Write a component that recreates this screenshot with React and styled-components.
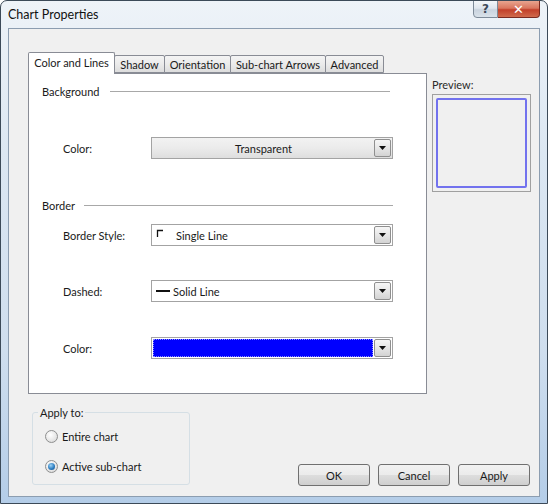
import styled, { createGlobalStyle } from "styled-components";

const GlobalStyle = createGlobalStyle`
  html, body {
    margin: 0;
    padding: 0;
    background: #ffffff;
  }
  * {
    box-sizing: border-box;
  }
`;

const Window = styled.div`
  width: 548px;
  height: 504px;
  display: flex;
  flex-direction: column;
  border: 1px solid #3c4a58;
  border-radius: 7px 7px 0 0;
  background: linear-gradient(180deg, #eef3f8 0%, #dce7f2 30%, #cfdeee 70%, #b4cde8 100%);
  font-family: Lato, "Noto Sans", sans-serif;
  font-size: 11px;
  color: #1a1a1a;
  overflow: hidden;
`;

const TitleBar = styled.div`
  height: 27px;
  display: flex;
  align-items: flex-start;
  padding-left: 7px;
`;

const Title = styled.div`
  margin-top: 6px;
  font-size: 12.5px;
  color: #111;
`;

const CaptionButtons = styled.div`
  margin-left: auto;
  margin-right: 7px;
  display: flex;
  margin-top: -1px;
`;

const CaptionButton = styled.div`
  width: ${(p) => p.$w}px;
  height: 18px;
  display: flex;
  align-items: center;
  justify-content: center;
  border: 1px solid ${(p) => (p.$close ? "#7a2a20" : "#7d8a98")};
  border-radius: ${(p) => (p.$close ? "0 0 4px 0" : "0 0 0 4px")};
  border-left-width: ${(p) => (p.$close ? 0 : 1)}px;
  background: ${(p) =>
    p.$close
      ? "linear-gradient(180deg, #e8a48f 0%, #d9765e 45%, #c2402a 55%, #d06a4c 100%)"
      : "linear-gradient(180deg, #f3f6f9 0%, #dfe6ee 45%, #c9d3de 55%, #d9e2ea 100%)"};
  color: ${(p) => (p.$close ? "#fff" : "#3d4a58")};
  font-weight: bold;
  font-size: ${(p) => (p.$close ? 13 : 12)}px;
  font-family: "DejaVu Sans", sans-serif;
`;

const Client = styled.div`
  flex: 1;
  margin: 0 7px 6px 7px;
  border: 1px solid #8c9db0;
  background: #f0f0f0;
  display: flex;
  flex-direction: column;
  padding: 23px 0 0 19px;
`;

const TopRow = styled.div`
  display: flex;
  gap: 5px;
`;

const TabsArea = styled.div`
  width: 399px;
  display: flex;
  flex-direction: column;
`;

const TabStrip = styled.div`
  display: flex;
  align-items: flex-end;
  height: 21px;
  position: relative;
  z-index: 1;
`;

const Tab = styled.div`
  width: ${(p) => p.$w}px;
  height: ${(p) => (p.$active ? 22 : 18)}px;
  margin-left: -1px;
  margin-bottom: ${(p) => (p.$active ? -1 : 0)}px;
  border: 1px solid #898c95;
  border-bottom: ${(p) => (p.$active ? "none" : "1px solid #898c95")};
  border-radius: 2px 2px 0 0;
  background: ${(p) =>
    p.$active ? "#ffffff" : "linear-gradient(180deg, #f4f4f4 0%, #ebebeb 50%, #dddddd 100%)"};
  display: flex;
  align-items: center;
  justify-content: center;
  padding-bottom: ${(p) => (p.$active ? 3 : 0)}px;
  white-space: nowrap;
  &:first-child {
    margin-left: 0;
  }
`;

const Panel = styled.div`
  height: 321px;
  background: #ffffff;
  border: 1px solid #898c95;
  padding: 10px 33px 0 13px;
  display: flex;
  flex-direction: column;
`;

const SectionHeader = styled.div`
  display: flex;
  align-items: center;
  height: 14px;
  margin-top: ${(p) => p.$mt}px;
  margin-right: ${(p) => p.$mr}px;
  &::after {
    content: "";
    flex: 1;
    height: 1px;
    background: #a8a8a8;
    margin-left: ${(p) => p.$gap}px;
  }
`;

const FormRow = styled.div`
  display: flex;
  align-items: center;
  margin-top: ${(p) => p.$mt}px;
`;

const FieldLabel = styled.div`
  width: 109px;
  padding-left: 21px;
`;

const Combo = styled.div`
  width: 242px;
  height: 22px;
  display: flex;
  align-items: stretch;
  border: 1px solid #a3a3a3;
  background: ${(p) =>
    p.$button ? "linear-gradient(180deg, #f2f2f2 0%, #ebebeb 50%, #dedede 100%)" : "#ffffff"};
  padding: 1px;
`;

const ComboValue = styled.div`
  flex: 1;
  display: flex;
  align-items: center;
  justify-content: ${(p) => (p.$center ? "center" : "flex-start")};
  padding-left: ${(p) => (p.$center ? 0 : 3)}px;
  gap: 3px;
`;

const ColorFill = styled.div`
  flex: 1;
  background: ${(p) => p.$color};
  outline: 1px dotted #8a8aff;
  outline-offset: -1px;
  margin-right: 1px;
`;

const DropButton = styled.div`
  width: 17px;
  display: flex;
  align-items: center;
  justify-content: center;
  border: 1px solid #8f8f8f;
  border-radius: 2px;
  background: linear-gradient(180deg, #f6f6f6 0%, #e6e6e6 50%, #d3d3d3 100%);
`;

const PreviewColumn = styled.div`
  display: flex;
  flex-direction: column;
  padding-top: 26px;
`;

const PreviewLabel = styled.div`
  height: 16px;
  color: #2a2a2a;
`;

const PreviewBox = styled.div`
  width: 99px;
  height: 98px;
  border: 1px solid #a0a0a0;
  padding: 3px;
  background: #f0f0f0;
`;

const PreviewInner = styled.div`
  width: 100%;
  height: 100%;
  border: 2px solid #7272ee;
  border-radius: 2px;
`;

const BottomRow = styled.div`
  flex: 1;
  display: flex;
  align-items: flex-end;
  justify-content: space-between;
  padding: 0 9px 10px 4px;
`;

const GroupBox = styled.fieldset`
  width: 158px;
  height: 79px;
  margin: 0 0 1px 0;
  padding: 4px 0 0 12px;
  border: 1px solid #d5dfe5;
  border-radius: 3px;
  display: flex;
  flex-direction: column;
  min-width: 0;
`;

const GroupLegend = styled.legend`
  padding: 0 2px;
  margin-left: -7px;
  color: #1a1a1a;
`;

const RadioRow = styled.label`
  display: flex;
  align-items: center;
  gap: 4px;
  height: 16px;
  margin-top: ${(p) => p.$mt}px;
`;

const RadioDot = styled.span`
  width: 13px;
  height: 13px;
  border-radius: 50%;
  border: 1px solid #8e8f8f;
  background: radial-gradient(circle at 40% 35%, #ffffff 0%, #e6e6e6 60%, #cfcfcf 100%);
  display: flex;
  align-items: center;
  justify-content: center;
  &::after {
    content: "";
    display: ${(p) => (p.$checked ? "block" : "none")};
    width: 7px;
    height: 7px;
    border-radius: 50%;
    background: radial-gradient(circle at 40% 35%, #9fd3f5 0%, #2e7fc2 55%, #12477e 100%);
  }
`;

const ButtonRow = styled.div`
  display: flex;
  gap: 8px;
`;

const PushButton = styled.button`
  width: 72px;
  height: 22px;
  border: 1px solid #707070;
  border-radius: 3px;
  background: linear-gradient(180deg, #f2f2f2 0%, #ebebeb 50%, #dddddd 51%, #cfcfcf 100%);
  font-family: inherit;
  font-size: 11px;
  color: #1a1a1a;
  padding: 0;
`;

const ArrowDown = () => (
  <svg width="7" height="4" viewBox="0 0 7 4">
    <path d="M0 0 H7 L3.5 4 Z" fill="#111" />
  </svg>
);

const SingleLineIcon = () => (
  <svg width="9" height="8" viewBox="0 0 9 8" style={{ marginTop: -4, marginRight: 8 }}>
    <path d="M1.5 8 V1.5 H7" stroke="#111" strokeWidth="1.3" fill="none" />
  </svg>
);

const SolidLineIcon = () => (
  <svg width="14" height="4" viewBox="0 0 14 4">
    <rect x="0" y="1" width="14" height="2" fill="#111" />
  </svg>
);

const tabs = [
  { label: "Color and Lines", w: 87, active: true },
  { label: "Shadow", w: 51 },
  { label: "Orientation", w: 67 },
  { label: "Sub-chart Arrows", w: 96 },
  { label: "Advanced", w: 59 },
];

const App = () => {
  return (
    <>
      <GlobalStyle />
      <Window>
        <TitleBar>
          <Title>Chart Properties</Title>
          <CaptionButtons>
            <CaptionButton $w={25}>?</CaptionButton>
            <CaptionButton $w={42} $close>
              ✕
            </CaptionButton>
          </CaptionButtons>
        </TitleBar>
        <Client>
          <TopRow>
            <TabsArea>
              <TabStrip>
                {tabs.map((t) => (
                  <Tab key={t.label} $w={t.w} $active={t.active}>
                    {t.label}
                  </Tab>
                ))}
              </TabStrip>
              <Panel>
                <SectionHeader $mt={0} $mr={3} $gap={10}>
                  Background
                </SectionHeader>
                <FormRow $mt={39}>
                  <FieldLabel>Color:</FieldLabel>
                  <Combo $button>
                    <ComboValue $center>Transparent</ComboValue>
                    <DropButton>
                      <ArrowDown />
                    </DropButton>
                  </Combo>
                </FormRow>
                <SectionHeader $mt={39} $mr={0} $gap={9}>
                  Border
                </SectionHeader>
                <FormRow $mt={12}>
                  <FieldLabel>Border Style:</FieldLabel>
                  <Combo>
                    <ComboValue>
                      <SingleLineIcon />
                      Single Line
                    </ComboValue>
                    <DropButton>
                      <ArrowDown />
                    </DropButton>
                  </Combo>
                </FormRow>
                <FormRow $mt={34}>
                  <FieldLabel>Dashed:</FieldLabel>
                  <Combo>
                    <ComboValue>
                      <SolidLineIcon />
                      Solid Line
                    </ComboValue>
                    <DropButton>
                      <ArrowDown />
                    </DropButton>
                  </Combo>
                </FormRow>
                <FormRow $mt={35}>
                  <FieldLabel>Color:</FieldLabel>
                  <Combo>
                    <ColorFill $color="#0000ff" />
                    <DropButton>
                      <ArrowDown />
                    </DropButton>
                  </Combo>
                </FormRow>
              </Panel>
            </TabsArea>
            <PreviewColumn>
              <PreviewLabel>Preview:</PreviewLabel>
              <PreviewBox>
                <PreviewInner />
              </PreviewBox>
            </PreviewColumn>
          </TopRow>
          <BottomRow>
            <GroupBox>
              <GroupLegend>Apply to:</GroupLegend>
              <RadioRow $mt={5}>
                <RadioDot />
                Entire chart
              </RadioRow>
              <RadioRow $mt={14}>
                <RadioDot $checked />
                Active sub-chart
              </RadioRow>
            </GroupBox>
            <ButtonRow>
              <PushButton>OK</PushButton>
              <PushButton>Cancel</PushButton>
              <PushButton>Apply</PushButton>
            </ButtonRow>
          </BottomRow>
        </Client>
      </Window>
    </>
  );
};

export default App;
